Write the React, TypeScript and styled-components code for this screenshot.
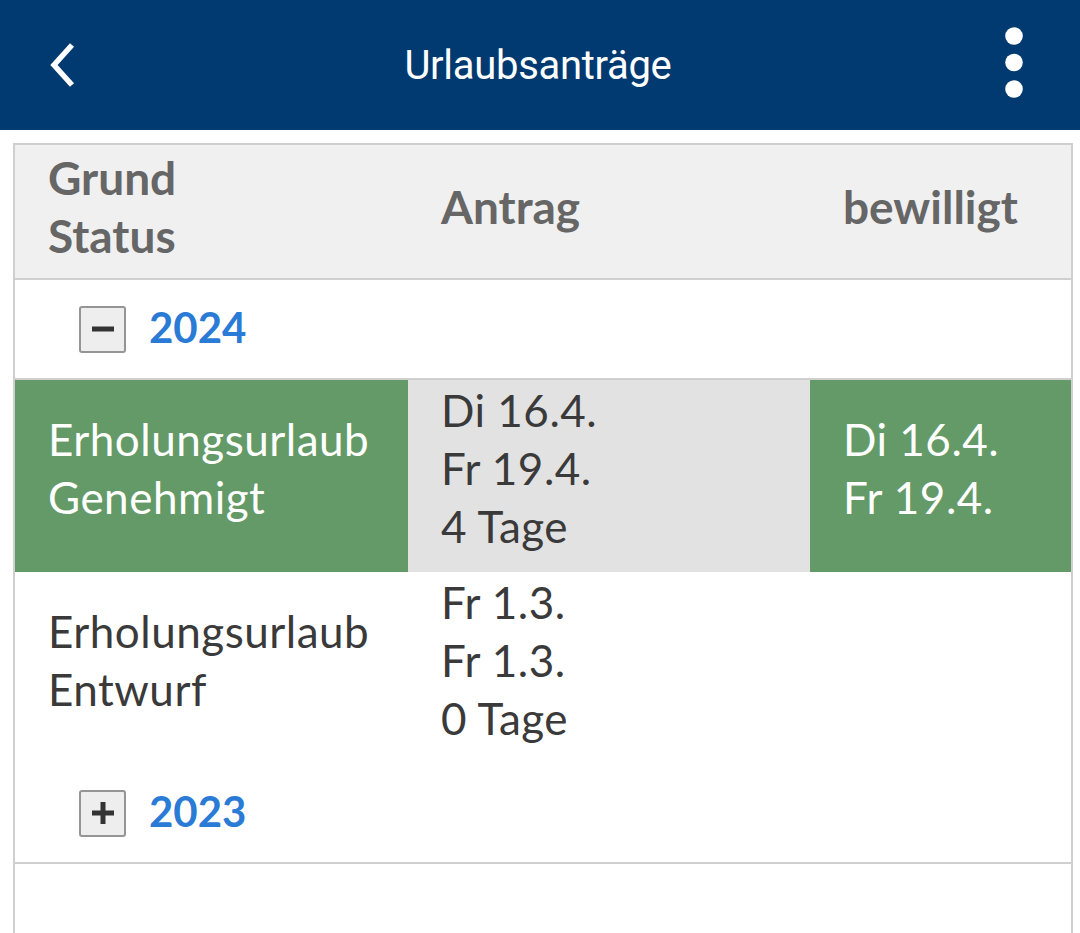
import React from "react";
import styled, { createGlobalStyle } from "styled-components";

const GlobalStyle = createGlobalStyle`
  html, body {
    margin: 0;
    padding: 0;
    background: #ffffff;
  }
  body {
    font-family: Lato, "Open Sans", sans-serif;
  }
`;

const Page = styled.div`
  width: 1080px;
  min-height: 933px;
  display: flex;
  flex-direction: column;
`;

const TopBar = styled.header`
  height: 130px;
  background: #003a70;
  display: flex;
  align-items: center;
  justify-content: space-between;
  padding: 0 44px 0 40px;
  box-sizing: border-box;
`;

const Title = styled.h1`
  margin: 0;
  font-family: Roboto, "Noto Sans", sans-serif;
  font-weight: 400;
  font-size: 40px;
  color: #ffffff;
  flex: 1;
  text-align: center;
  letter-spacing: -0.3px;
`;

const IconButton = styled.button<{ $lift?: number }>`
  background: none;
  border: 0;
  padding: 0;
  width: 44px;
  height: 80px;
  display: flex;
  align-items: center;
  justify-content: center;
  margin-bottom: ${(p) => p.$lift || 0}px;
  cursor: pointer;
`;

const Table = styled.div`
  margin: 13px 7px 0 13px;
  border: 2px solid #cfcfcf;
  border-bottom: 0;
  flex: 1;
  display: flex;
  flex-direction: column;
`;

const Row = styled.div<{ $divider?: boolean }>`
  display: grid;
  grid-template-columns: 393px 402px 1fr;
  border-bottom: ${(p) => (p.$divider ? "2px solid #cfcfcf" : "0")};
`;

const HeadRow = styled(Row)`
  height: 133px;
  background: #f0f0f0;
  align-items: center;
`;

const HeadCell = styled.div<{ $align?: "left" | "right" }>`
  padding: 0 54px 10px 33px;
  font-weight: 700;
  font-size: 46px;
  line-height: 58px;
  color: #666666;
  text-align: ${(p) => p.$align || "left"};
`;

const GroupRow = styled.div<{ $divider?: boolean }>`
  height: 98px;
  display: flex;
  align-items: center;
  gap: 23px;
  padding-left: 64px;
  border-bottom: ${(p) => (p.$divider ? "2px solid #cfcfcf" : "0")};
`;

const Toggle = styled.span`
  width: 47px;
  height: 47px;
  box-sizing: border-box;
  border: 2px solid #959595;
  border-radius: 3px;
  background: #eeeeee;
  display: flex;
  align-items: center;
  justify-content: center;
`;

const Year = styled.span`
  font-weight: 700;
  font-size: 42px;
  color: #2a7bd6;
  margin-bottom: 4px;
`;

const Cell = styled.div<{ $bg?: string; $light?: boolean; $center?: boolean }>`
  background: ${(p) => p.$bg || "transparent"};
  color: ${(p) => (p.$light ? "#ffffff" : "#3a3a3a")};
  font-size: 44px;
  line-height: 58px;
  letter-spacing: 0.5px;
  white-space: nowrap;
  padding: 1px 20px 17px 33px;
  display: flex;
  flex-direction: column;
  justify-content: ${(p) => (p.$center ? "center" : "flex-start")};
  min-height: 174px;
`;

const GREEN = "#649a68";
const GREY = "#e2e2e2";

type Entry = {
  reason: string;
  status: string;
  from: string;
  to: string;
  days: string;
  approved?: [string, string];
};

const entries: Entry[] = [
  {
    reason: "Erholungsurlaub",
    status: "Genehmigt",
    from: "Di 16.4.",
    to: "Fr 19.4.",
    days: "4 Tage",
    approved: ["Di 16.4.", "Fr 19.4."],
  },
  {
    reason: "Erholungsurlaub",
    status: "Entwurf",
    from: "Fr 1.3.",
    to: "Fr 1.3.",
    days: "0 Tage",
  },
];

const BackIcon = () => (
  <svg width="34" height="50" viewBox="0 0 34 50">
    <path d="M27 5 L9 25 L27 45" fill="none" stroke="#fff" strokeWidth="5.5" />
  </svg>
);

const MoreIcon = () => (
  <svg width="24" height="74" viewBox="0 0 24 74">
    <circle cx="12" cy="10" r="8.8" fill="#fff" />
    <circle cx="12" cy="36.5" r="8.8" fill="#fff" />
    <circle cx="12" cy="63" r="8.8" fill="#fff" />
  </svg>
);

const ToggleIcon = ({ open }: { open: boolean }) => (
  <svg width="26" height="26" viewBox="0 0 26 26">
    <rect x="2" y="10.5" width="22" height="5" fill="#333" />
    {!open && <rect x="10.5" y="2" width="5" height="22" fill="#333" />}
  </svg>
);

export default function App() {
  return (
    <Page>
      <GlobalStyle />
      <TopBar>
        <IconButton aria-label="Zurück">
          <BackIcon />
        </IconButton>
        <Title>Urlaubsanträge</Title>
        <IconButton aria-label="Menü" $lift={5}>
          <MoreIcon />
        </IconButton>
      </TopBar>
      <Table>
        <HeadRow $divider>
          <HeadCell>
            Grund
            <br />
            Status
          </HeadCell>
          <HeadCell>Antrag</HeadCell>
          <HeadCell $align="right">bewilligt</HeadCell>
        </HeadRow>
        <GroupRow $divider>
          <Toggle>
            <ToggleIcon open />
          </Toggle>
          <Year>2024</Year>
        </GroupRow>
        {entries.map((e, i) => {
          const ok = !!e.approved;
          return (
            <Row key={i}>
              <Cell $bg={ok ? GREEN : undefined} $light={ok} $center>
                <span>{e.reason}</span>
                <span>{e.status}</span>
              </Cell>
              <Cell $bg={ok ? GREY : undefined}>
                <span>{e.from}</span>
                <span>{e.to}</span>
                <span>{e.days}</span>
              </Cell>
              <Cell $bg={ok ? GREEN : undefined} $light={ok} $center>
                {e.approved && (
                  <>
                    <span>{e.approved[0]}</span>
                    <span>{e.approved[1]}</span>
                  </>
                )}
              </Cell>
            </Row>
          );
        })}
        <GroupRow $divider>
          <Toggle>
            <ToggleIcon open={false} />
          </Toggle>
          <Year>2023</Year>
        </GroupRow>
      </Table>
    </Page>
  );
}
